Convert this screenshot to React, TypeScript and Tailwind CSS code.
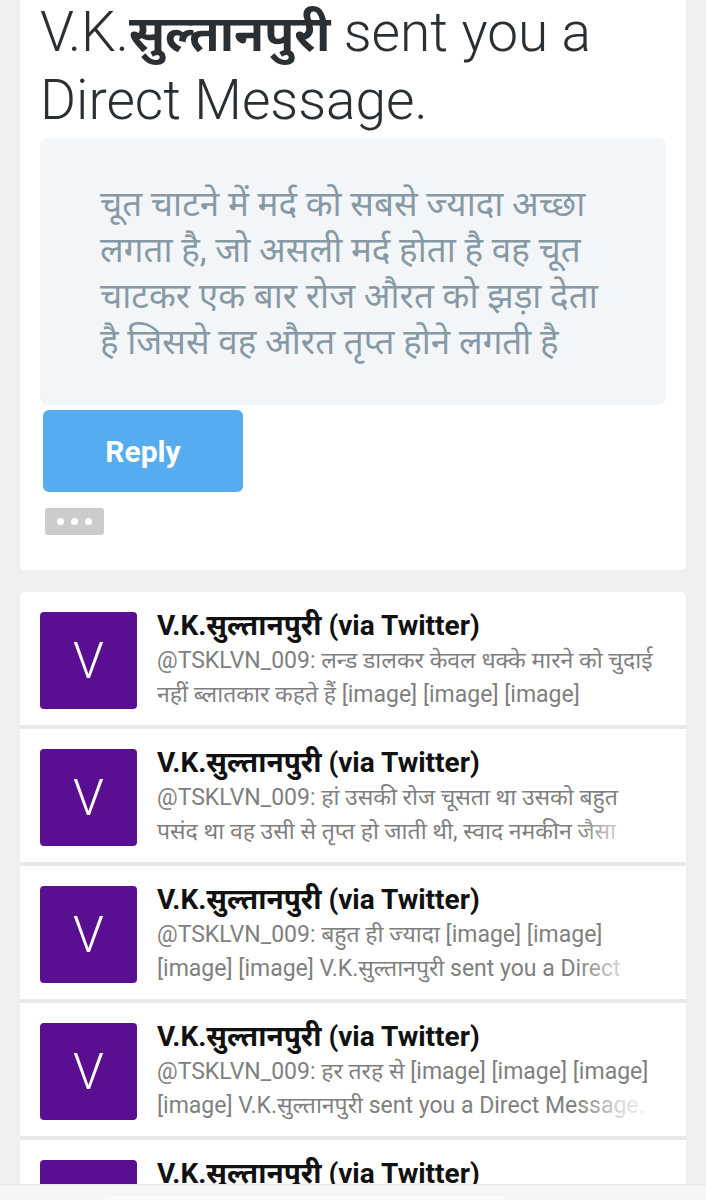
import React from 'react';

const FONT = 'font-[Roboto,"Noto_Sans",sans-serif]';

const messages = [
  {
    line1: '@TSKLVN_009: लन्ड डालकर केवल धक्के मारने को चुदाई',
    line2: 'नहीं ब्लातकार कहते हैं [image] [image] [image]',
  },
  {
    line1: '@TSKLVN_009: हां उसकी रोज चूसता था उसको बहुत',
    line2: 'पसंद था वह उसी से तृप्त हो जाती थी, स्वाद नमकीन जैसा',
  },
  {
    line1: '@TSKLVN_009: बहुत ही ज्यादा [image] [image]',
    line2: '[image] [image] V.K.सुल्तानपुरी sent you a Direct',
  },
  {
    line1: '@TSKLVN_009: हर तरह से [image] [image] [image]',
    line2: '[image] V.K.सुल्तानपुरी sent you a Direct Message.',
  },
  { line1: '', line2: '' },
];

function MessageRow({ line1, line2 }: { line1: string; line2: string }) {
  return (
    <div className="flex h-[137px] items-start border-b-[4px] border-[#e8e8e8] pl-[20px] pr-[20px] pt-[16px]">
      <div className="mt-[4px] flex h-[97px] w-[97px] shrink-0 items-center justify-center rounded-[4px] bg-[#5a0f92]">
        <span className="font-[Roboto,sans-serif] text-[50px] font-light leading-none text-white">V</span>
      </div>
      <div className={`ml-[20px] min-w-0 flex-1 ${FONT}`}>
        <div className="whitespace-nowrap text-[28px] font-bold leading-[36px] text-[#111111]">
          V.K.सुल्तानपुरी (via Twitter)
        </div>
        <div className="overflow-hidden whitespace-nowrap text-[23px] leading-[34px] text-[#7f7f7f]">
          {line1}
        </div>
        <div className="relative overflow-hidden whitespace-nowrap text-[23px] leading-[34px] text-[#7f7f7f]">
          {line2}
          <div className="absolute right-0 top-0 h-full w-[90px] bg-gradient-to-l from-white via-white/70 to-transparent" />
        </div>
      </div>
    </div>
  );
}

export default function App() {
  return (
    <div className="min-h-[1200px] bg-[#efefef] pb-[40px]">
      {/* Direct message card */}
      <div className="mx-[20px] rounded-b-[6px] bg-white px-[20px] pb-[35px]">
        <h1 className={`-mt-[2px] h-[134px] text-[55px] font-light leading-[68px] text-[#292f33] ${FONT}`}>
          V.K.<span className="text-[49px] font-bold leading-[0]">सुल्तानपुरी</span> sent you a
          <br />
          Direct Message.
        </h1>
        <div className={`mt-[6px] h-[267px] rounded-[8px] bg-[#f3f6f9] pl-[60px] pt-[44px] text-[35px] leading-[46px] text-[#8899a6] ${FONT}`}>
          <div className="whitespace-nowrap">चूत चाटने में मर्द को सबसे ज्यादा अच्छा</div>
          <div className="whitespace-nowrap">लगता है, जो असली मर्द होता है वह चूत</div>
          <div className="whitespace-nowrap">चाटकर एक बार रोज औरत को झड़ा देता</div>
          <div className="whitespace-nowrap">है जिससे वह औरत तृप्त होने लगती है</div>
        </div>
        <button className="ml-[3px] mt-[5px] flex h-[82px] w-[200px] items-center justify-center rounded-[6px] bg-[#55acee] font-[Roboto,sans-serif] text-[30px] font-bold text-white">
          Reply
        </button>
        <div className="ml-[5px] mt-[16px] flex h-[27px] w-[59px] items-center justify-center gap-[7px] rounded-[3px] bg-[#cccccc]">
          <span className="h-[7px] w-[7px] rounded-full bg-white" />
          <span className="h-[7px] w-[7px] rounded-full bg-white" />
          <span className="h-[7px] w-[7px] rounded-full bg-white" />
        </div>
      </div>

      {/* Notification list */}
      <div className="mx-[20px] mt-[22px] overflow-hidden rounded-[5px] bg-white">
        {messages.map((m, i) => (
          <MessageRow key={i} line1={m.line1} line2={m.line2} />
        ))}
      </div>

      {/* Bottom system bar */}
      <div className="fixed bottom-0 left-0 right-0 h-[16px] border-t border-[#e9e9e9] bg-[#f6f6f6]">
        <div className="absolute bottom-0 left-[105px] h-[4px] w-[400px] rounded-t-[2px] bg-[#fbfbfb]" />
      </div>
    </div>
  );
}
